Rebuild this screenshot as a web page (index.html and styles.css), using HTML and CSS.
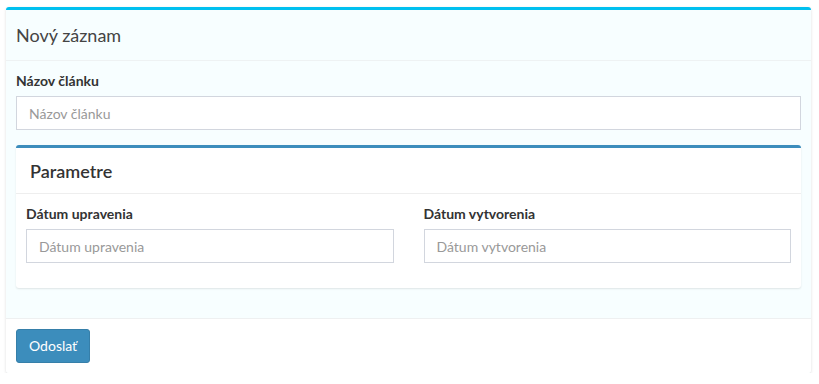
FILE: index.html
```html
<!DOCTYPE html>
<html lang="sk">
<head>
<meta charset="utf-8">
<title>Nový záznam</title>
<link rel="stylesheet" href="styles.css">
</head>
<body>
<div class="box box-info">
  <div class="box-header"><h3 class="box-title">Nový záznam</h3></div>
  <div class="box-body">
    <div class="form-group">
      <label class="label">Názov článku</label>
      <input class="input" type="text" placeholder="Názov článku">
    </div>
    <div class="inner-box">
      <div class="inner-header"><h3 class="inner-title">Parametre</h3></div>
      <div class="inner-body">
        <div class="row">
          <div class="form-group">
            <label class="label">Dátum upravenia</label>
            <input class="input" type="text" placeholder="Dátum upravenia">
          </div>
          <div class="form-group">
            <label class="label">Dátum vytvorenia</label>
            <input class="input" type="text" placeholder="Dátum vytvorenia">
          </div>
        </div>
      </div>
    </div>
  </div>
  <div class="box-footer"><button class="btn" type="button">Odoslať</button></div>
</div>
</body>
</html>
```
FILE: styles.css
```css
* { box-sizing: border-box; }
body {
  margin: 0;
  background: #fff;
  font-family: Lato, "Noto Sans", sans-serif;
  font-size: 14px;
  color: #333;
}
.box {
  margin: 7px 8px 0 6px;
  width: 805px;
  border-top: 3px solid #00c0ef;
  border-radius: 3px;
  background: #f7feff;
  box-shadow: 0 1px 3px rgba(0,0,0,0.14);
}
.box-header {
  height: 51px;
  display: flex;
  align-items: center;
  padding: 0 10px;
  border-bottom: 1px solid #eef2f3;
}
.box-title {
  margin: 0;
  font-size: 18px;
  font-weight: 400;
  color: #444;
  line-height: 20px;
}
.box-body { padding: 10px 10px 10px 10px; }
.form-group { margin-bottom: 15px; display: flex; flex-direction: column; }
.label {
  font-weight: 700;
  line-height: 20px;
  margin-bottom: 5px;
  color: #333;
}
.input {
  height: 34px;
  border: 1px solid #d2d6de;
  padding: 6px 12px;
  font: inherit;
  font-size: 14px;
  background: #fff;
  color: #555;
  outline: none;
}
.input::placeholder { color: #999; }
.inner-box {
  border-top: 3px solid #3c8dbc;
  border-radius: 3px;
  background: #fff;
  box-shadow: 0 1px 2px rgba(0,0,0,0.1);
  margin-bottom: 20px;
}
.inner-header {
  height: 46px;
  display: flex;
  align-items: center;
  padding: 0 14px;
  border-bottom: 1px solid #eeeeee;
}
.inner-title {
  margin: 0;
  font-size: 18px;
  font-weight: 600;
  color: #333;
  line-height: 20px;
}
.inner-body { padding: 10px 10px 10px 10px; }
.row { display: grid; grid-template-columns: 1fr 1fr; column-gap: 30px; }
.box-footer {
  background: #fff;
  border-top: 1px solid #eef0f1;
  padding: 10px;
  border-radius: 0 0 3px 3px;
}
.btn {
  height: 34px;
  padding: 6px 12px;
  background: #3c8dbc;
  border: 1px solid #367fa9;
  border-radius: 3px;
  color: #fff;
  font: inherit;
  font-size: 14px;
  line-height: 20px;
}
```
